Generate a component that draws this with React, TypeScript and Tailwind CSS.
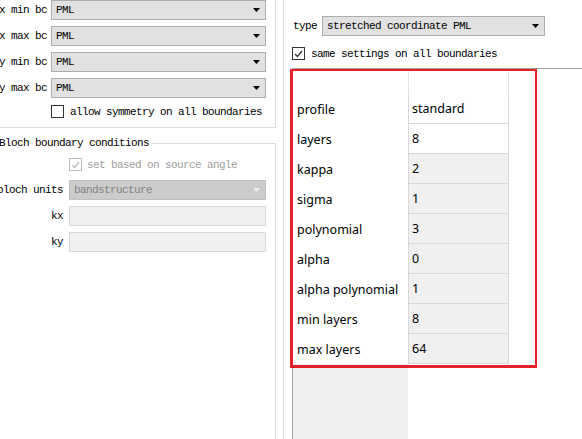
import React from "react"

const mono = "font-['Liberation_Mono',monospace] text-[11px] tracking-[-0.6px] leading-[12px]"

const bcRows = ["x min bc", "x max bc", "y min bc", "y max bc"]

const pmlRows = [
  { name: "profile", value: "standard", white: true },
  { name: "layers", value: "8", white: true },
  { name: "kappa", value: "2" },
  { name: "sigma", value: "1" },
  { name: "polynomial", value: "3" },
  { name: "alpha", value: "0" },
  { name: "alpha polynomial", value: "1" },
  { name: "min layers", value: "8" },
  { name: "max layers", value: "64" },
]

function Arrow({ color = "#000" }: { color?: string }) {
  return (
    <svg width="7" height="4" viewBox="0 0 7 4" className="shrink-0">
      <polygon points="0,0 7,0 3.5,4" fill={color} />
    </svg>
  )
}

function Select({ value, width, disabled }: { value: string; width: string; disabled?: boolean }) {
  return (
    <div
      className={`flex h-[20px] items-center justify-between border pl-[4px] pr-[5px] ${width} ${
        disabled ? "border-[#bfbfbf] bg-[#cccccc] text-[#838383]" : "border-[#adadad] bg-[#e1e1e1] text-black"
      }`}
    >
      <span className={mono}>{value}</span>
      <Arrow color={disabled ? "#efefef" : "#000"} />
    </div>
  )
}

function Check({ checked, disabled }: { checked?: boolean; disabled?: boolean }) {
  const c = disabled ? "#bcbcbc" : "#333333"
  return (
    <div className={`flex h-[13px] w-[13px] shrink-0 items-center justify-center border bg-white ${disabled ? "border-[#bcbcbc]" : "border-[#333333]"}`}>
      {checked ? (
        <svg width="9" height="8" viewBox="0 0 9 8">
          <polyline points="1,4 3.5,6.5 8,1" fill="none" stroke={c} strokeWidth="1.3" />
        </svg>
      ) : null}
    </div>
  )
}

export default function App() {
  return (
    <div className="relative flex h-[439px] w-[582px] overflow-hidden bg-white text-black">
      {/* left panel */}
      <div className="flex h-full w-[283px] shrink-0 flex-col">
        <div className="flex h-[128px] w-[276px] flex-col border-b border-r border-[#dcdcdc]">
          <div className="flex flex-col gap-[6px]">
            {bcRows.map((label) => (
              <div key={label} className="flex h-[20px] items-center">
                <div className={`flex w-[47px] justify-end whitespace-nowrap ${mono}`}>{label}</div>
                <div className="ml-[4px]">
                  <Select value="PML" width="w-[215px]" />
                </div>
              </div>
            ))}
          </div>
          <div className="ml-[51px] mt-[7px] flex items-center gap-[6px]">
            <Check />
            <span className={`whitespace-nowrap ${mono}`}>allow symmetry on all boundaries</span>
          </div>
        </div>

        <div className="mt-[9px] flex w-[276px] flex-1 flex-col">
          <div className="flex h-[12px]">
            <span className={`-ml-[1px] whitespace-nowrap ${mono}`}>Bloch boundary conditions</span>
            <div className="ml-[3px] mt-[6px] flex-1 border-r border-t border-[#dcdcdc]" />
          </div>
          <div className="flex flex-1 flex-col border-r border-[#dcdcdc]">
            <div className="ml-[69px] mt-[9px] flex items-center gap-[5px]">
              <Check checked disabled />
              <span className={`whitespace-nowrap text-[#a0a0a0] ${mono}`}>set based on source angle</span>
            </div>
            <div className="mt-[9px] flex items-center">
              <div className={`flex w-[63px] justify-end whitespace-nowrap ${mono}`}>bloch units</div>
              <div className="ml-[6px]">
                <Select value="bandstructure" width="w-[197px]" disabled />
              </div>
            </div>
            {["kx", "ky"].map((k) => (
              <div key={k} className="mt-[6px] flex items-center">
                <div className={`flex w-[63px] justify-end ${mono}`}>{k}</div>
                <div className="ml-[6px] h-[20px] w-[197px] border border-[#d9d9d9] bg-[#f0f0f0]" />
              </div>
            ))}
          </div>
        </div>
      </div>

      {/* right panel */}
      <div className="flex h-full flex-1 flex-col border-l border-[#dcdcdc]">
        <div className="ml-[9px] mt-[16px] flex items-center gap-[5px]">
          <span className={mono}>type</span>
          <Select value="stretched coordinate PML" width="w-[223px]" />
        </div>
        <div className="ml-[8px] mt-[11px] flex items-center gap-[6px]">
          <Check checked />
          <span className={`whitespace-nowrap ${mono}`}>same settings on all boundaries</span>
        </div>

        <div className="ml-[8px] mt-[8px] flex flex-1 flex-col border-l border-t border-[#a0a0a0] font-['Noto_Sans',sans-serif] text-[12.5px] text-black">
          <div className="flex h-[25px]">
            <div className="w-[115px]" />
            <div className="w-[101px] border-x border-[#e4e4e4]" />
          </div>
          {pmlRows.map((row) => (
            <div key={row.name} className="flex h-[30px]">
              <div className="flex w-[115px] items-center pl-[4px] pt-[2px]">{row.name}</div>
              <div
                className={`flex w-[101px] items-center border-x border-b border-[#d8d8d8] pl-[3px] pt-[2px] ${
                  row.white ? "bg-white" : "bg-[#f0f0f0]"
                }`}
              >
                {row.value}
              </div>
            </div>
          ))}
          <div className="flex flex-1">
            <div className="w-[115px] bg-[#f0f0f0]" />
          </div>
        </div>
      </div>

      {/* red highlight */}
      <div className="pointer-events-none absolute left-[290px] top-[69px] h-[299px] w-[247px] border-[2px] border-l-[3px] border-b-[3px] border-[#e8202a]" />
    </div>
  )
}
